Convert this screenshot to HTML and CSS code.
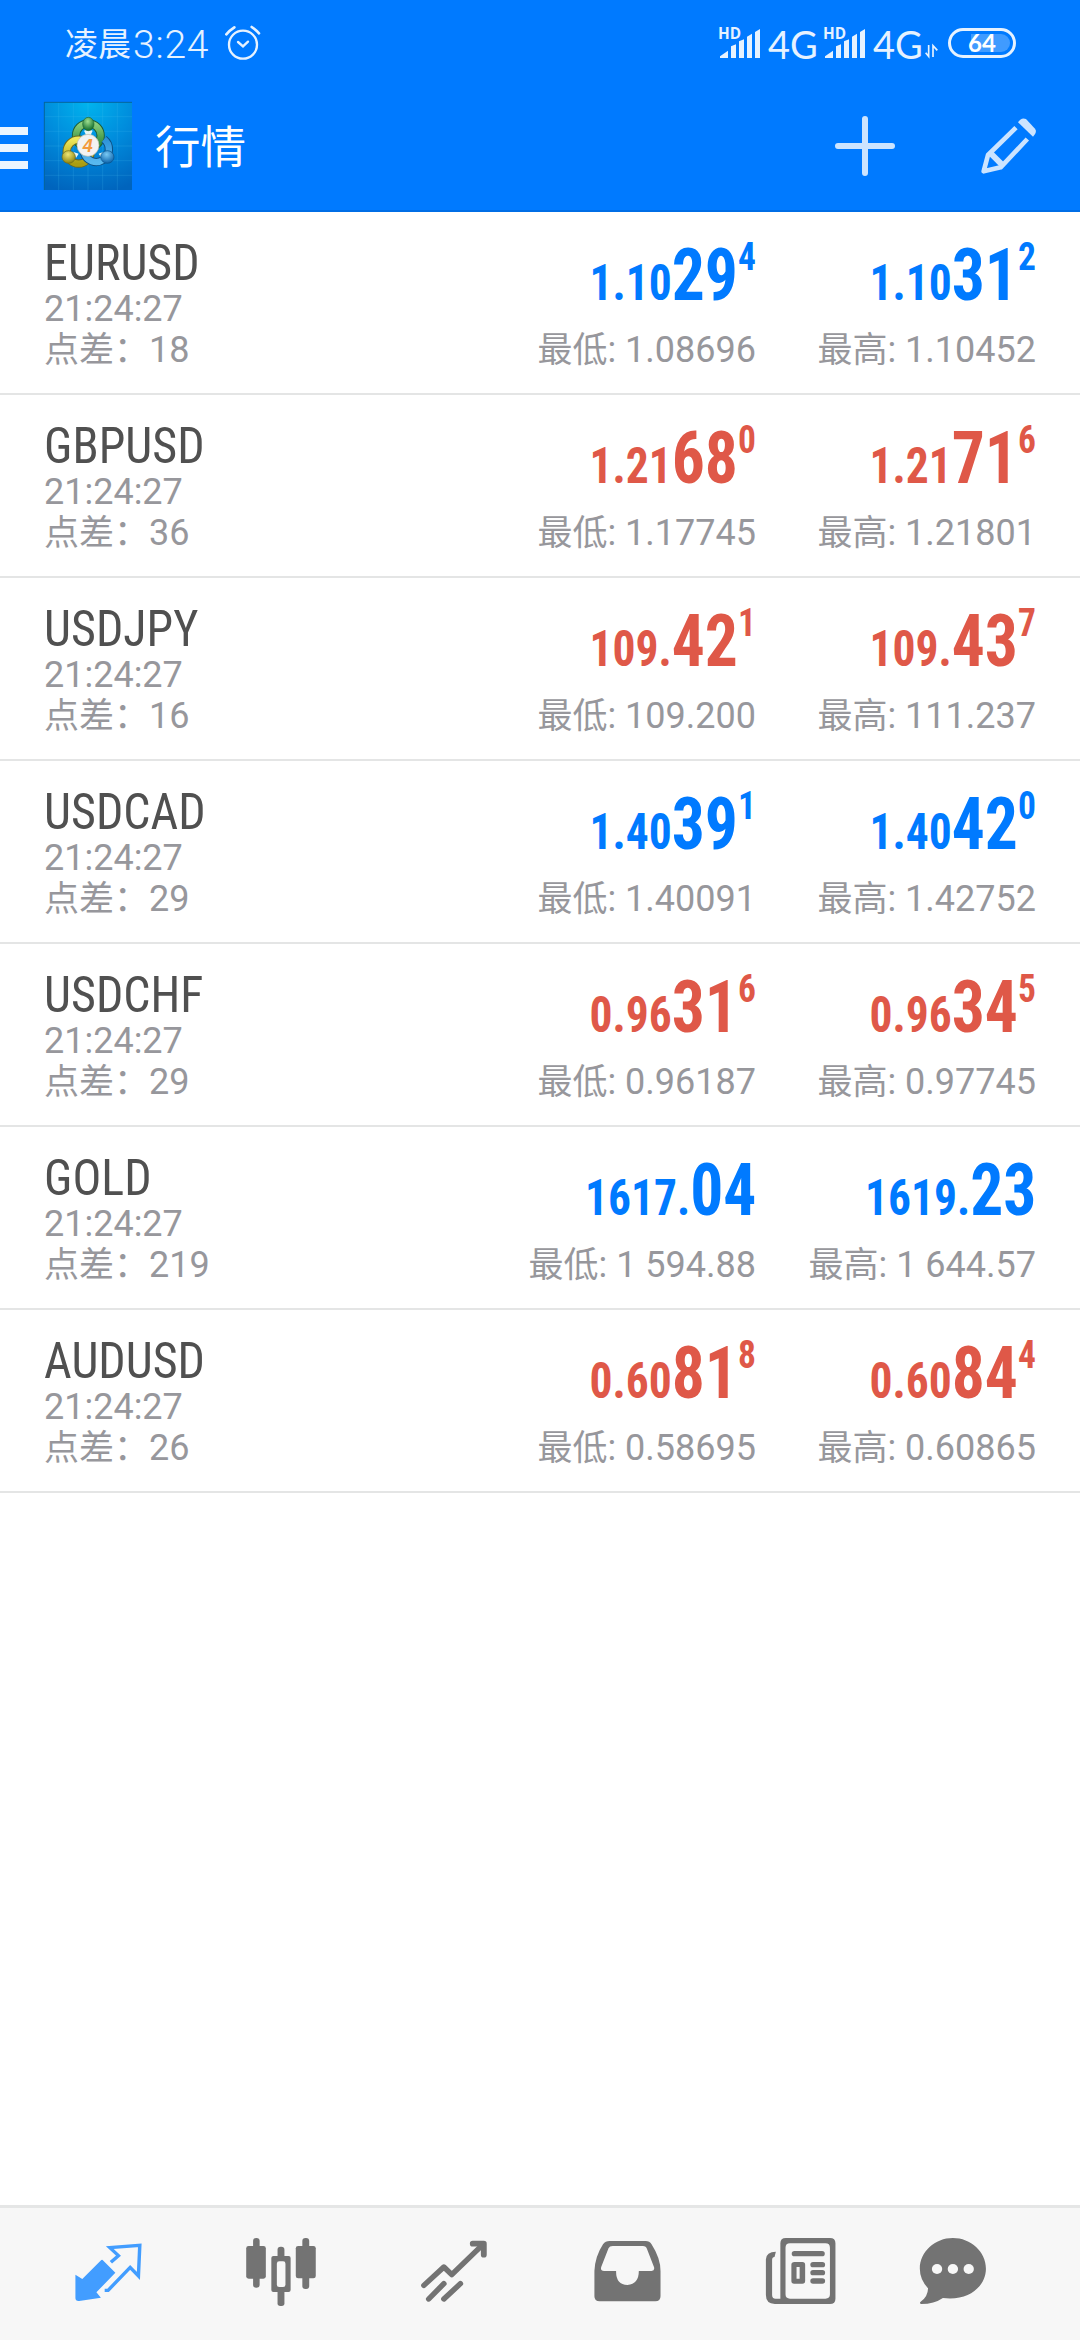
FILE: index.html
```html
<!DOCTYPE html>
<html lang="zh-CN">
<head>
<meta charset="utf-8">
<title>行情</title>
<link rel="stylesheet" href="styles.css">
</head>
<body>
<div class="screen">
  <div class="status">
    <div class="clock"><span class="day">凌晨</span><span class="time">3:24</span>
      <svg class="alarm" width="36" height="36" viewBox="678 76 108 108" fill="none" stroke="#e6f2ff" stroke-width="7" stroke-linecap="round"><circle cx="732" cy="135" r="42"/><path d="M717 127l15 13 15-14"/><path d="M682 104q10-12 24-21M780 101q-9-10-22-19" stroke-width="8"/></svg>
    </div>
    <div class="signals">
      <svg class="bars" width="42" height="36" viewBox="54 72 126 108" fill="#e6f2ff"><path d="M60 171v-5l24-17v22zM93 171v-35l15-6v41zM117 171v-50l15-6v56zM141 171v-64l15-9v73zM165 171v-78l15-9v87z"/><text class="hd" x="54" y="114">HD</text></svg>
      <span class="net">4G</span>
      <svg class="bars second" width="42" height="36" viewBox="54 72 126 108" fill="#e6f2ff"><path d="M60 171v-5l24-17v22zM93 171v-35l15-6v41zM117 171v-50l15-6v56zM141 171v-64l15-9v73zM165 171v-78l15-9v87z"/><text class="hd" x="54" y="114">HD</text></svg>
      <span class="net">4G</span>
      <svg class="updown" width="13" height="14" viewBox="675 129 39 42" fill="none" stroke="#e6f2ff" stroke-width="5"><path d="M686 132v34l-9-11M699 168v-34l13 14"/></svg>
      <div class="battery"><span>64</span></div>
    </div>
  </div>
  <header class="bar">
    <div class="burger"><i></i><i></i><i></i></div>
    <svg class="logo" width="88" height="88" viewBox="0 0 264 264">
      <defs>
        <radialGradient id="bg" cx=".5" cy="0" r="1.05"><stop offset="0" stop-color="#00b4ee"/><stop offset=".5" stop-color="#008bdc"/><stop offset="1" stop-color="#0064bd"/></radialGradient>
        <linearGradient id="gr" x1="0" y1="0" x2="0" y2="1"><stop offset="0" stop-color="#8ccf7c"/><stop offset="1" stop-color="#1f7f32"/></linearGradient>
        <linearGradient id="ye" x1="0" y1="0" x2="0" y2="1"><stop offset="0" stop-color="#efe75a"/><stop offset="1" stop-color="#aa9d12"/></linearGradient>
        <linearGradient id="bl" x1="0" y1="0" x2="0" y2="1"><stop offset="0" stop-color="#2d92d8"/><stop offset="1" stop-color="#58b8ef"/></linearGradient>
        <radialGradient id="gb" cx=".45" cy=".3" r=".7"><stop offset="0" stop-color="#9fe090"/><stop offset="1" stop-color="#0d6a2a"/></radialGradient>
        <radialGradient id="yb" cx=".45" cy=".3" r=".7"><stop offset="0" stop-color="#eee676"/><stop offset="1" stop-color="#8c820c"/></radialGradient>
        <radialGradient id="bb" cx=".45" cy=".3" r=".7"><stop offset="0" stop-color="#79c9f4"/><stop offset="1" stop-color="#0b62ab"/></radialGradient>
      </defs>
      <rect width="264" height="264" fill="url(#bg)"/>
      <path d="M44 0v264M88 0v264M132 0v264M176 0v264M220 0v264M0 44h264M0 88h264M0 132h264M0 176h264M0 220h264" stroke="#4cc4f4" stroke-opacity=".28" stroke-width="2" fill="none"/>
      <path d="M0 1h264M1 0v264" stroke="#05669c" stroke-width="3"/>
      <circle cx="133" cy="101" r="37" fill="none" stroke="#1d5d36" stroke-width="25"/>
      <circle cx="133" cy="101" r="37" fill="none" stroke="url(#gr)" stroke-width="19"/>
      <circle cx="104" cy="149" r="36" fill="none" stroke="#6c6a20" stroke-width="25"/>
      <circle cx="104" cy="149" r="36" fill="none" stroke="url(#ye)" stroke-width="19"/>
      <path d="M180 112A38 38 0 1 1 120 152" fill="none" stroke="#0c5187" stroke-width="25"/>
      <path d="M180 112A38 38 0 1 1 120 152" fill="none" stroke="url(#bl)" stroke-width="19"/>
      <path d="M120 86q13-6 26 0l-6 13h-14zM88 150l16 5-8 13zM178 150l-14 5 8 13z" fill="#e9f7f5"/>
      <ellipse cx="133" cy="66" rx="17" ry="20" fill="url(#gb)" stroke="#1c6735" stroke-width="2"/>
      <ellipse cx="74" cy="165" rx="20" ry="19" fill="url(#yb)" stroke="#6c6a20" stroke-width="2"/>
      <ellipse cx="190" cy="165" rx="20" ry="19" fill="url(#bb)" stroke="#0c5187" stroke-width="2"/>
      <circle cx="132" cy="130" r="33" fill="#f2f2f2" stroke="#b9b9a8" stroke-width="2"/>
      <text x="131" y="150" text-anchor="middle" class="four">4</text>
    </svg>
    <h1>行情</h1>
    <svg class="plus" width="60" height="60" viewBox="0 0 60 60" stroke="#cce4ff" stroke-width="6" stroke-linecap="round"><path d="M30 3v54M3 30h54"/></svg>
    <svg class="pencil" width="56" height="56" viewBox="842 353 168 168" fill="none" stroke="#cce4ff" stroke-width="14"><path d="M947 382L863 464L850 513L901 501L981 416" stroke-linejoin="round"/><path d="M870 458L908 496" stroke-width="18"/><path d="M953 366q10-16 24-10l27 29q8 9-6 24z" fill="#cce4ff" stroke="none"/></svg>
  </header>
  <main>
    <section class="row up">
      <div class="sym"><b>EURUSD</b><span>21:24:27</span><span><em>点差：</em>18</span></div>
      <div class="quote"><p class="price">1.10<big>29</big><sup>4</sup></p><span><em>最低</em>: 1.08696</span></div>
      <div class="quote"><p class="price">1.10<big>31</big><sup>2</sup></p><span><em>最高</em>: 1.10452</span></div>
    </section>
    <section class="row down">
      <div class="sym"><b>GBPUSD</b><span>21:24:27</span><span><em>点差：</em>36</span></div>
      <div class="quote"><p class="price">1.21<big>68</big><sup>0</sup></p><span><em>最低</em>: 1.17745</span></div>
      <div class="quote"><p class="price">1.21<big>71</big><sup>6</sup></p><span><em>最高</em>: 1.21801</span></div>
    </section>
    <section class="row down">
      <div class="sym"><b>USDJPY</b><span>21:24:27</span><span><em>点差：</em>16</span></div>
      <div class="quote"><p class="price">109.<big>42</big><sup>1</sup></p><span><em>最低</em>: 109.200</span></div>
      <div class="quote"><p class="price">109.<big>43</big><sup>7</sup></p><span><em>最高</em>: 111.237</span></div>
    </section>
    <section class="row up">
      <div class="sym"><b>USDCAD</b><span>21:24:27</span><span><em>点差：</em>29</span></div>
      <div class="quote"><p class="price">1.40<big>39</big><sup>1</sup></p><span><em>最低</em>: 1.40091</span></div>
      <div class="quote"><p class="price">1.40<big>42</big><sup>0</sup></p><span><em>最高</em>: 1.42752</span></div>
    </section>
    <section class="row down">
      <div class="sym"><b>USDCHF</b><span>21:24:27</span><span><em>点差：</em>29</span></div>
      <div class="quote"><p class="price">0.96<big>31</big><sup>6</sup></p><span><em>最低</em>: 0.96187</span></div>
      <div class="quote"><p class="price">0.96<big>34</big><sup>5</sup></p><span><em>最高</em>: 0.97745</span></div>
    </section>
    <section class="row up">
      <div class="sym"><b>GOLD</b><span>21:24:27</span><span><em>点差：</em>219</span></div>
      <div class="quote"><p class="price">1617.<big>04</big></p><span><em>最低</em>: 1 594.88</span></div>
      <div class="quote"><p class="price">1619.<big>23</big></p><span><em>最高</em>: 1 644.57</span></div>
    </section>
    <section class="row down">
      <div class="sym"><b>AUDUSD</b><span>21:24:27</span><span><em>点差：</em>26</span></div>
      <div class="quote"><p class="price">0.60<big>81</big><sup>8</sup></p><span><em>最低</em>: 0.58695</span></div>
      <div class="quote"><p class="price">0.60<big>84</big><sup>4</sup></p><span><em>最高</em>: 0.60865</span></div>
    </section>
  </main>
  <nav class="tabs">
    <svg viewBox="212 138 203.3 210" preserveAspectRatio="none"><path d="M298 210L335 248L280 307L293 323L230 333Q219 334 219 324V254L239 267L292 212Q296 208 298 210Z" fill="#429dff"/><path d="M322 217L344 197L319 173L406 166L402 258L378 232L314 301H304" fill="none" stroke="#429dff" stroke-width="10"/></svg>
    <svg viewBox="714.4 138 203.3 210" preserveAspectRatio="none" fill="#737373"><rect x="735" y="144" width="19" height="149" rx="9"/><rect x="715" y="168" width="57" height="98" rx="7"/><rect x="878" y="144" width="20" height="153" rx="9"/><rect x="859" y="168" width="58" height="97" rx="7"/><rect x="806" y="170" width="20" height="40" rx="9"/><rect x="806" y="290" width="20" height="58" rx="8"/><rect x="788" y="198" width="56" height="108" rx="6"/><rect x="804" y="214" width="25" height="77" rx="7" fill="#f7f7f7"/></svg>
    <svg viewBox="1216.8 138 203.3 210" preserveAspectRatio="none" fill="none" stroke="#737373" stroke-width="16" stroke-linecap="round" stroke-linejoin="round"><path d="M1231 286L1289 231L1312 254L1402 164"/><path d="M1373 161H1405V194" stroke-width="17"/><path d="M1245 327L1289 281M1289 327L1337 281"/></svg>
    <svg viewBox="151 138 203.3 210" preserveAspectRatio="none"><path fill-rule="evenodd" fill="#737373" d="M202 153H307Q318 153 324 163Q350 205 350 243V319Q350 334 335 334H173Q158 334 158 319V243Q160 199 183 163Q190 153 202 153ZM211 168Q202 168 199 175L178 230Q174 243 186 243H221Q220 284 254 285Q287 282 287 243H324Q334 241 331 231L311 178Q308 168 299 168Z"/></svg>
    <svg viewBox="656.3 138 203.3 210" preserveAspectRatio="none"><path fill="#737373" fill-rule="evenodd" d="M714 144H842Q858 144 858 160V326Q858 342 842 342H682Q656 341 656 315V208Q657 185 685 185L681 201Q674 201 674 210V315Q674 326 684 326H698V160Q698 144 714 144ZM726 160Q713 160 713 173V313Q713 326 726 326H829Q842 326 842 313V173Q842 160 829 160Z"/><g fill="#737373"><rect x="731" y="183" width="96" height="16" rx="8"/><rect x="785" y="216" width="43" height="16" rx="8"/><rect x="785" y="240" width="43" height="16" rx="8"/><rect x="785" y="265" width="43" height="16" rx="8"/><path fill-rule="evenodd" d="M739 216H762Q770 216 770 224V273Q770 281 762 281H738Q730 281 730 273V224Q730 216 739 216ZM745 231V266H754V231Z"/></g></svg>
    <svg viewBox="1097.7 138 203.3 210" preserveAspectRatio="none"><path d="M1199 144C1251 144 1295 185 1295 236C1295 285 1250 334 1170 324Q1145 342 1107 342Q1099 340 1107 334Q1126 320 1127 295Q1103 268 1103 236C1103 185 1147 144 1199 144Z" fill="#737373"/><g fill="#f7f7f7"><circle cx="1153" cy="237" r="15"/><circle cx="1199" cy="237" r="15"/><circle cx="1245" cy="237" r="15"/></g></svg>
  </nav>
</div>
</body>
</html>
```
FILE: styles.css
```css
* { box-sizing: border-box; }
body { margin: 0; background: #fff; font-family: Roboto, "Noto Sans CJK SC", sans-serif; }
.screen { width: 1080px; height: 2340px; display: flex; flex-direction: column; }
svg { display: block; overflow: visible; flex: none; }

.status { height: 80px; background: #007aff; color: #e6f2ff; display: flex; justify-content: space-between; padding: 25px 64px 0 65px; }
.clock, .signals { display: flex; height: 36px; }
.clock { line-height: 40px; }
.day { font-size: 33px; }
.time { font-size: 39px; font-weight: 350; margin-left: 2px; letter-spacing: .8px; }
.alarm { margin-left: 16px; }
.hd { font: 700 46px "Open Sans", sans-serif; }
.net { font: 400 38px/38px Lato, sans-serif; width: 47px; margin-left: 8px; }
.second { margin-left: 8px; }
.updown { margin: 19px 0 0 5px; }
.battery { width: 68px; height: 30px; margin: 3px 0 0 10px; border: 3px solid #e6f2ff; border-radius: 15px; padding: 3px; }
.battery span { display: block; width: 56px; height: 18px; border-radius: 9px; background: linear-gradient(90deg, transparent 30%, #409bff 30%); font: 700 24px/18px Lato, sans-serif; text-align: center; color: #fff; }

.bar { height: 132px; background: #007aff; border-bottom: 2px solid #006ee6; display: flex; align-items: flex-start; }
.burger { width: 28px; padding-top: 47px; display: flex; flex-direction: column; gap: 9px; }
.burger i { height: 8px; background: #ebf5ff; }
.logo { margin: 22px 0 0 16px; }
.four { font: italic 700 54px "Liberation Sans", sans-serif; fill: #f39a3d; }
.bar h1 { margin: 36px 0 0 23px; font-size: 45.5px; line-height: 66px; font-weight: 400; color: #fff; flex: 1; }
.plus { margin: 36px 86px 0 0; }
.pencil { margin: 38px 43px 0 0; }

.row { height: 183px; border-bottom: 2px solid #e4e5e5; display: grid; grid-template-columns: 1fr 280px 280px; padding: 26px 44px 0; }
.sym, .quote { display: flex; flex-direction: column; align-items: flex-start; font-size: 36px; line-height: 41px; color: #97979c; }
.quote { align-items: flex-end; }
em { font-style: normal; font-size: 35px; }
.sym b { margin-bottom: 1px; font-family: "Roboto Condensed", Roboto, sans-serif; font-stretch: 75%; font-weight: 400; font-size: 50px; line-height: 50px; color: #505050; transform: scaleX(.96); transform-origin: 3px 0; }
.price { margin: 0 0 16px; height: 76px; line-height: 76px; font-family: "Roboto Condensed", Roboto, sans-serif; font-stretch: 75%; font-weight: 700; font-size: 50px; white-space: nowrap; transform: scaleX(.91); transform-origin: 100% 0; }
.price big { font-size: 72px; line-height: 76px; }
.price sup { font-size: 39px; line-height: 0; vertical-align: 30px; }
.up .price { color: #007aff; }
.down .price { color: #df5848; }

.tabs { margin-top: auto; height: 135px; background: #f7f7f7; border-top: 3px solid #e5e6e6; display: grid; grid-template-columns: 173px 173px 173px 174px 152px 1fr; padding: 28px 0 0 73px; }
.tabs svg { width: 70px; height: 70px; }
```
